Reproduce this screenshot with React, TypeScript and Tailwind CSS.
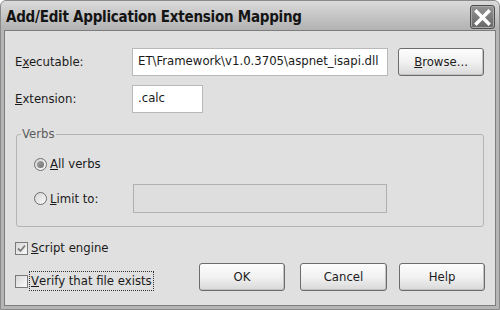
import React from 'react';

const font = { fontFamily: '"DejaVu Sans Condensed", "DejaVu Sans", Tahoma, sans-serif' };

function Radio({ checked }: { checked?: boolean }) {
  return (
    <span className="flex h-[13px] w-[13px] shrink-0 items-center justify-center rounded-full border border-[#6f6f6f] bg-linear-to-br from-[#d4d4d4] to-[#fbfbfb]">
      {checked && <span className="h-[7px] w-[7px] rounded-full bg-linear-to-br from-[#a8a8a8] to-[#6e6e6e]" />}
    </span>
  );
}

function Checkbox({ checked }: { checked?: boolean }) {
  return (
    <span className="flex h-[13px] w-[13px] shrink-0 items-center justify-center border border-[#7a7a7a] bg-linear-to-br from-[#d8d8d8] to-[#fafafa]">
      {checked && (
        <svg width="9" height="9" viewBox="0 0 9 9">
          <path d="M1 4.5 L3.5 7 L8 1.5" fill="none" stroke="#7b7b7b" strokeWidth="1.8" />
        </svg>
      )}
    </span>
  );
}

function Button({ children, className = '' }: { children: React.ReactNode; className?: string }) {
  return (
    <button className={`h-[28px] rounded-[3px] border border-[#6c6c6c] bg-linear-to-b from-[#fdfdfd] via-[#f1f1f1] to-[#d9d9d9] text-[13px] text-[#1c1c1c] shadow-[inset_-1px_-1px_0_#c2c2c2] ${className}`}>
      {children}
    </button>
  );
}

export default function App() {
  return (
    <div style={font} className="flex h-[310px] w-[500px] flex-col overflow-hidden rounded-t-[6px] border border-[#8a8a8a] bg-[#b5b5b5] text-[13px] text-[#1a1a1a]">
      {/* Title bar */}
      <div className="flex h-[29px] shrink-0 items-center justify-between bg-linear-to-b from-[#dadada] via-[#c6c6c6] to-[#b2b2b2] pl-[5px] pr-[4px] pt-[3px]">
        <span className="text-[15px] font-bold tracking-[-0.25px] text-[#141414]">Add/Edit Application Extension Mapping</span>
        <span className="flex h-[24px] w-[25px] items-center justify-center rounded-[3px] border border-[#4d4d4d] bg-linear-to-b from-[#959595] to-[#666666] shadow-[inset_0_0_0_1px_#aaaaaa]">
          <svg width="17" height="17" viewBox="0 0 17 17">
            <path d="M2.5 2.5 L14.5 14.5 M14.5 2.5 L2.5 14.5" stroke="#ffffff" strokeWidth="3.4" strokeLinecap="square" />
          </svg>
        </span>
      </div>

      {/* Body */}
      <div className="mx-[3px] mb-[3px] flex flex-1 flex-col border border-[#7d7d7d] bg-[#e0e0e0] px-[10px] pt-[17px]">
        <div className="flex h-[28px] items-center">
          <span className="w-[117px]">
            E<u>x</u>ecutable:
          </span>
          <div className="flex h-[28px] w-[256px] items-center border border-[#b9b9b9] bg-white pl-[5px] pb-[3px]">
            ET\Framework\v1.0.3705\aspnet_isapi.dll
          </div>
          <Button className="ml-[10px] w-[86px]">
            <u>B</u>rowse...
          </Button>
        </div>

        <div className="mt-[9px] flex h-[28px] items-center">
          <span className="w-[117px]">
            <u>E</u>xtension:
          </span>
          <div className="flex h-[28px] w-[71px] items-center border border-[#b9b9b9] bg-white pl-[5px] pb-[3px]">.calc</div>
        </div>

        <fieldset className="ml-[1px] mt-[13px] w-[468px] min-w-0 rounded-[3px] border border-[#b4b4b4] pb-[13px] pl-[17px]">
          <legend className="ml-[-13px] px-[1px] leading-[16px] text-[#5c5c5c]">Verbs</legend>
          <div className="mt-[14px] flex h-[16px] items-center">
            <Radio checked />
            <span className="ml-[3px]">
              <u>A</u>ll verbs
            </span>
          </div>
          <div className="mt-[12px] flex h-[29px] items-center">
            <div className="flex w-[99px] items-center">
              <Radio />
              <span className="ml-[3px]">
                <u>L</u>imit to:
              </span>
            </div>
            <div className="h-[29px] w-[254px] border border-[#b0b0b0] bg-[#dedede]" />
          </div>
        </fieldset>

        <div className="mt-[13px] flex h-[16px] items-center">
          <Checkbox checked />
          <span className="ml-[3px]">
            <u>S</u>cript engine
          </span>
        </div>

        <div className="mt-[7px] flex h-[28px] items-end">
          <div className="flex h-[20px] items-center">
            <Checkbox />
            <span className="ml-[1px] flex h-[20px] items-center border border-dotted border-[#333] px-[1px]">
              <u>V</u>erify that file exists
            </span>
          </div>
          <div className="ml-auto flex">
            <Button className="w-[86px]">OK</Button>
            <Button className="ml-[15px] w-[87px]">Cancel</Button>
            <Button className="ml-[12px] w-[86px]">Help</Button>
          </div>
        </div>
      </div>
    </div>
  );
}
